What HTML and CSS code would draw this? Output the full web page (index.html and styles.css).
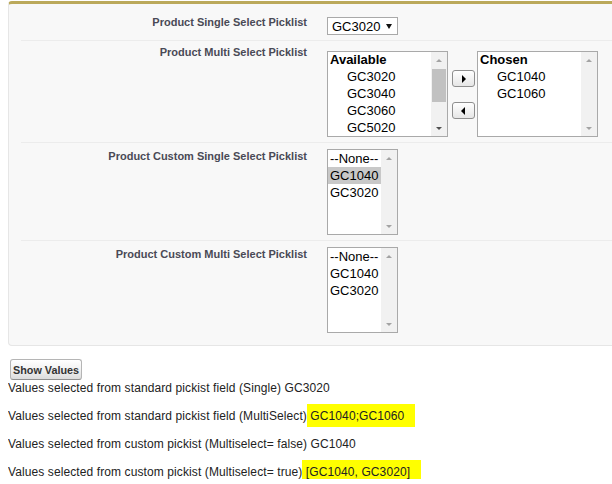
FILE: index.html
```html
<!DOCTYPE html>
<html>
<head>
<meta charset="utf-8">
<link rel="stylesheet" href="styles.css">
</head>
<body>
<div class="panel">
  <div class="row r1">
    <div class="label">Product Single Select Picklist</div>
    <div class="data">
      <div class="select"><span>GC3020</span><span class="caret"></span></div>
    </div>
  </div>
  <div class="row r2">
    <div class="label">Product Multi Select Picklist</div>
    <div class="data multi">
      <div class="listbox wide">
        <div class="opts">
          <div class="opt grp">Available</div>
          <div class="opt ind">GC3020</div>
          <div class="opt ind">GC3040</div>
          <div class="opt ind">GC3060</div>
          <div class="opt ind">GC5020</div>
        </div>
        <div class="sb">
          <div class="arr"><span class="up"></span></div>
          <div class="thumb"></div>
          <div class="track"></div>
          <div class="arr"><span class="dn dark"></span></div>
        </div>
      </div>
      <div class="movers">
        <div class="mv"><span class="tri-r"></span></div>
        <div class="mv"><span class="tri-l"></span></div>
      </div>
      <div class="listbox wide">
        <div class="opts">
          <div class="opt grp">Chosen</div>
          <div class="opt ind">GC1040</div>
          <div class="opt ind">GC1060</div>
        </div>
        <div class="sb">
          <div class="arr"><span class="up"></span></div>
          <div class="track"></div>
          <div class="arr"><span class="dn"></span></div>
        </div>
      </div>
    </div>
  </div>
  <div class="row r3">
    <div class="label">Product Custom Single Select Picklist</div>
    <div class="data">
      <div class="listbox narrow">
        <div class="opts">
          <div class="opt">--None--</div>
          <div class="opt sel">GC1040</div>
          <div class="opt">GC3020</div>
        </div>
        <div class="sb">
          <div class="arr"><span class="up"></span></div>
          <div class="track"></div>
          <div class="arr"><span class="dn"></span></div>
        </div>
      </div>
    </div>
  </div>
  <div class="row r4">
    <div class="label">Product Custom Multi Select Picklist</div>
    <div class="data">
      <div class="listbox narrow">
        <div class="opts">
          <div class="opt">--None--</div>
          <div class="opt">GC1040</div>
          <div class="opt">GC3020</div>
        </div>
        <div class="sb">
          <div class="arr"><span class="up"></span></div>
          <div class="track"></div>
          <div class="arr"><span class="dn"></span></div>
        </div>
      </div>
    </div>
  </div>
</div>
<div class="actions">
  <button class="btn" type="button">Show Values</button>
</div>
<div class="lines">
  <div class="line">Values selected from standard pickist field (Single) GC3020</div>
  <div class="line">Values selected from standard pickist field (MultiSelect)<span class="hl"> GC1040;GC1060</span></div>
  <div class="line">Values selected from custom pickist (Multiselect= false) GC1040</div>
  <div class="line">Values selected from custom pickist (Multiselect= true)<span class="hl"> [GC1040, GC3020]</span></div>
</div>
</body>
</html>
```
FILE: styles.css
```css
html {
  overflow: hidden;
  background: #ffffff;
}
body {
  margin: 1px 0 0 8px;
  font-family: "Liberation Sans", Arial, sans-serif;
  color: #222222;
}
.panel {
  box-sizing: border-box;
  background: #f8f8f8;
  border: 1px solid #e6e6e6;
  border-right: none;
  border-top: 3px solid #bba95b;
  border-radius: 4px 0 0 4px;
  padding: 5px 0 12px 12px;
}
.row {
  display: grid;
  grid-template-columns: 286px 1fr;
  column-gap: 20px;
  padding: 6px 0 5px;
  border-bottom: 1px solid #ececec;
}
.row.r2 {
  padding-top: 4px;
}
.row.r4 {
  border-bottom: none;
  padding-bottom: 0;
}
.label {
  text-align: right;
  font-size: 11px;
  line-height: 14px;
  font-weight: bold;
  color: #4a4a56;
}
.data {
  display: flex;
  align-items: flex-start;
}
.select {
  margin-top: 2px;
  width: 71px;
  height: 18px;
  box-sizing: border-box;
  border: 1px solid #a9a9a9;
  background: #ffffff;
  display: flex;
  align-items: center;
  padding-left: 4px;
  font-size: 13px;
  color: #000000;
}
.caret {
  margin-left: 6px;
  width: 0;
  height: 0;
  border-left: 3px solid transparent;
  border-right: 3px solid transparent;
  border-top: 5px solid #111111;
}
.multi {
  margin-top: 6px;
}
.listbox {
  display: flex;
  height: 86px;
  box-sizing: border-box;
  border: 1px solid #a9a9a9;
  background: #ffffff;
}
.listbox.wide {
  width: 121px;
}
.listbox.narrow {
  width: 71px;
}
.opts {
  flex: 1;
  overflow: hidden;
  font-size: 13px;
  line-height: 17px;
  color: #000000;
}
.opt {
  padding-left: 2px;
  white-space: nowrap;
}
.opt.grp {
  font-weight: bold;
  margin-top: -1px;
}
.opt.ind {
  padding-left: 19px;
}
.opt.sel {
  background: #c8c8c8;
}
.sb {
  width: 16px;
  background: #f1f1f1;
  display: flex;
  flex-direction: column;
}
.arr {
  height: 16px;
  display: flex;
  align-items: center;
  justify-content: center;
}
.up {
  width: 0;
  height: 0;
  border-left: 3px solid transparent;
  border-right: 3px solid transparent;
  border-bottom: 3px solid #a3a3a3;
}
.dn {
  width: 0;
  height: 0;
  border-left: 3px solid transparent;
  border-right: 3px solid transparent;
  border-top: 3px solid #a3a3a3;
}
.dn.dark {
  border-top-color: #505050;
}
.thumb {
  height: 33px;
  margin: 1px 1px 0;
  background: #c1c1c1;
}
.track {
  flex: 1;
}
.movers {
  display: flex;
  flex-direction: column;
  gap: 15px;
  margin: 19px 2px 0 4px;
}
.mv {
  width: 23px;
  height: 17px;
  box-sizing: border-box;
  border: 1px solid #8e8e8e;
  border-radius: 3px;
  background: linear-gradient(#ffffff, #e6e6e6);
  display: flex;
  align-items: center;
  justify-content: center;
}
.tri-r {
  width: 0;
  height: 0;
  border-top: 4px solid transparent;
  border-bottom: 4px solid transparent;
  border-left: 4px solid #000000;
  margin-left: 1px;
}
.tri-l {
  width: 0;
  height: 0;
  border-top: 4px solid transparent;
  border-bottom: 4px solid transparent;
  border-right: 4px solid #000000;
  margin-right: 1px;
}
.actions {
  margin-top: 13px;
  padding-left: 2px;
  display: flex;
}
.btn {
  width: 72px;
  height: 21px;
  box-sizing: border-box;
  margin: 0;
  padding: 0 2px;
  border: 1px solid #b5b5b5;
  border-bottom-color: #8f8f8f;
  border-radius: 3px;
  background: linear-gradient(#ffffff, #f3f3f3 45%, #dcdcdc);
  font-family: "Liberation Sans", Arial, sans-serif;
  font-size: 10.8px;
  font-weight: bold;
  color: #333333;
}
.lines {
  display: flex;
  flex-direction: column;
  gap: 14px;
  padding-top: 1px;
  font-size: 12px;
  line-height: 14px;
  letter-spacing: 0.1px;
  color: #222222;
}
.line {
  white-space: nowrap;
}
.hl {
  background: #ffff00;
  padding: 5px 11px 4px 0;
}
```
